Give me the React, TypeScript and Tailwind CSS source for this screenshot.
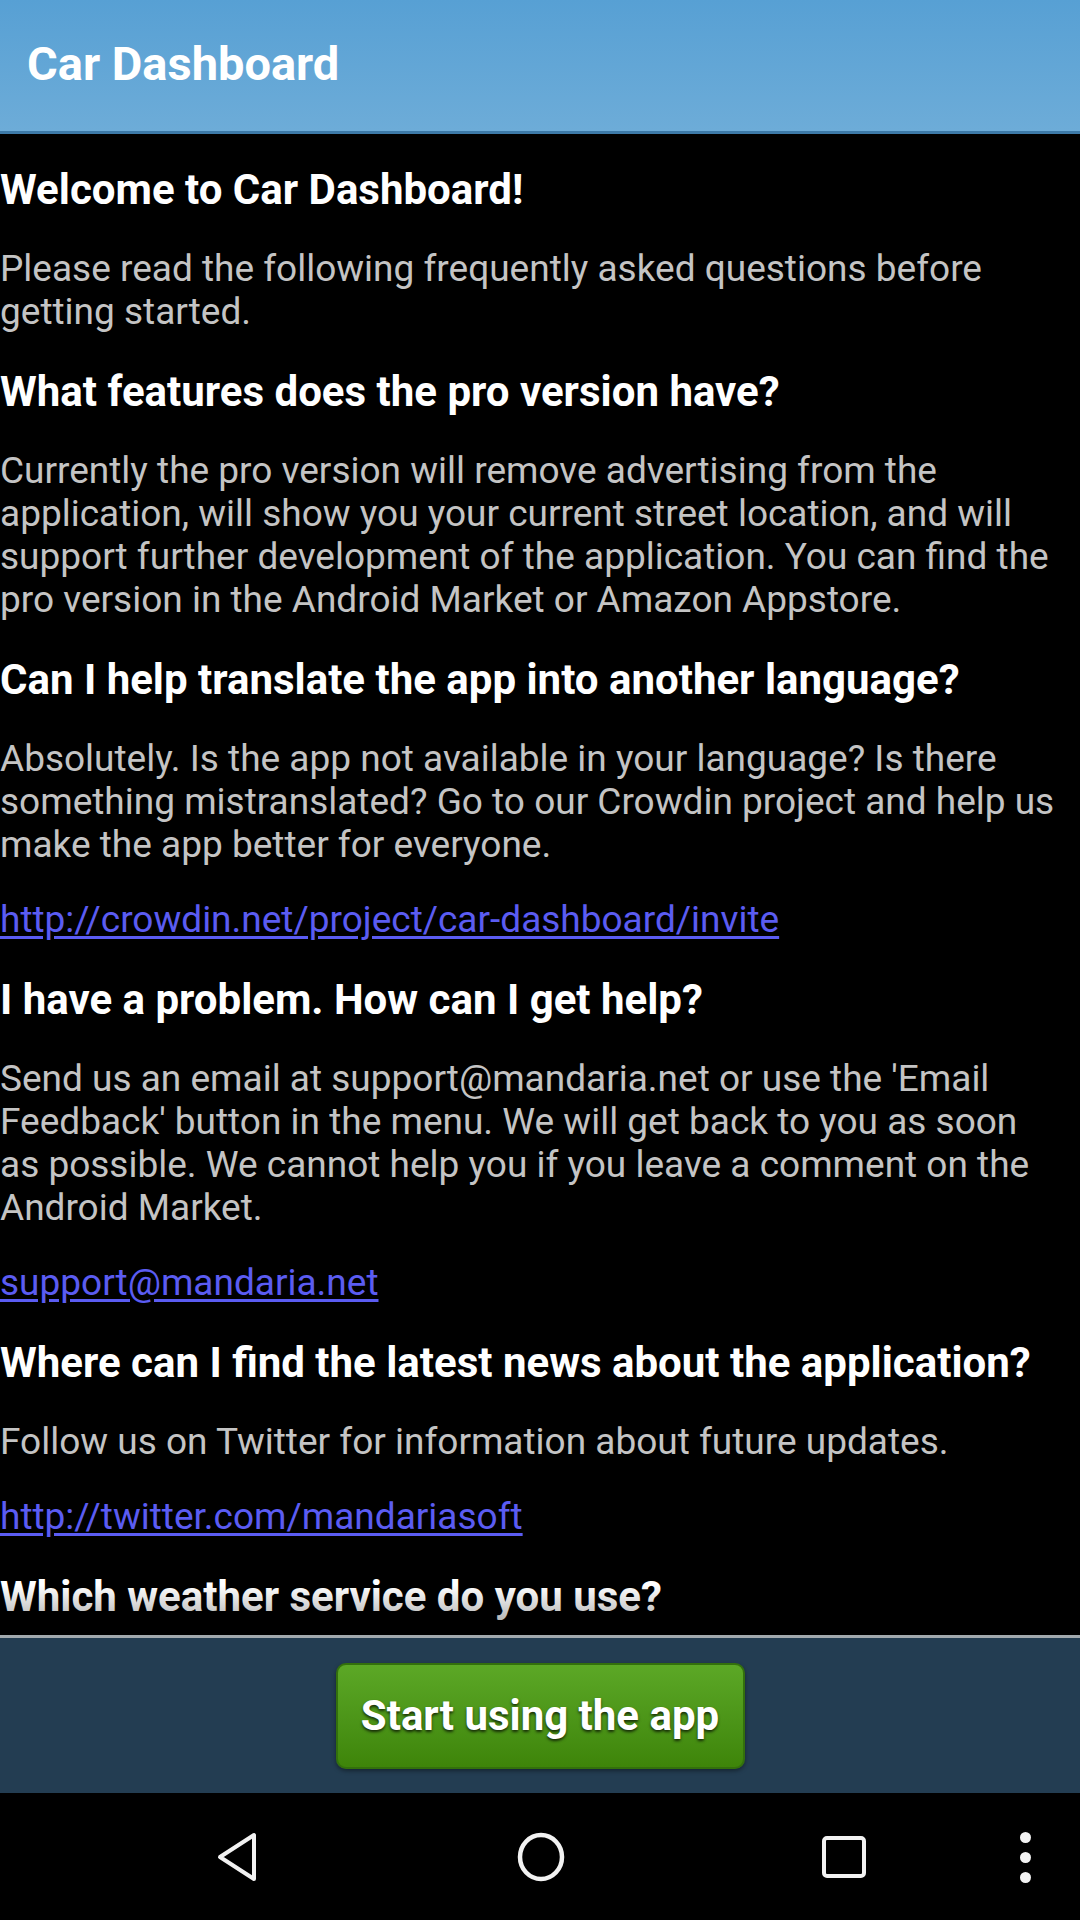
import React from 'react';

type Block =
  | { kind: 'h'; text: string }
  | { kind: 'p'; lines: string[] }
  | { kind: 'a'; text: string };

const blocks: Block[] = [
  { kind: 'h', text: 'Welcome to Car Dashboard!' },
  { kind: 'p', lines: ['Please read the following frequently asked questions before', 'getting started.'] },
  { kind: 'h', text: 'What features does the pro version have?' },
  {
    kind: 'p',
    lines: [
      'Currently the pro version will remove advertising from the',
      'application, will show you your current street location, and will',
      'support further development of the application. You can find the',
      'pro version in the Android Market or Amazon Appstore.',
    ],
  },
  { kind: 'h', text: 'Can I help translate the app into another language?' },
  {
    kind: 'p',
    lines: [
      'Absolutely. Is the app not available in your language? Is there',
      'something mistranslated? Go to our Crowdin project and help us',
      'make the app better for everyone.',
    ],
  },
  { kind: 'a', text: 'http://crowdin.net/project/car-dashboard/invite' },
  { kind: 'h', text: 'I have a problem. How can I get help?' },
  {
    kind: 'p',
    lines: [
      "Send us an email at support@mandaria.net or use the 'Email",
      "Feedback' button in the menu. We will get back to you as soon",
      'as possible. We cannot help you if you leave a comment on the',
      'Android Market.',
    ],
  },
  { kind: 'a', text: 'support@mandaria.net' },
  { kind: 'h', text: 'Where can I find the latest news about the application?' },
  { kind: 'p', lines: ['Follow us on Twitter for information about future updates.'] },
  { kind: 'a', text: 'http://twitter.com/mandariasoft' },
  { kind: 'h', text: 'Which weather service do you use?' },
];

const FaqBlock: React.FC<{ block: Block; first: boolean }> = ({ block, first }) => {
  if (block.kind === 'h') {
    return (
      <h2 className={`${first ? '' : 'mt-[37px]'} text-[42px] leading-[43px] font-bold text-white whitespace-nowrap`}>
        {block.text}
      </h2>
    );
  }
  if (block.kind === 'a') {
    return (
      <a className="mt-[32px] block text-[37px] leading-[43px] text-[#5b5cf2] underline underline-offset-[4px] whitespace-nowrap">
        {block.text}
      </a>
    );
  }
  return (
    <p className="mt-[36px] text-[37px] leading-[43px] text-[#c4c4c4] whitespace-nowrap">
      {block.lines.map((l, i) => (
        <span key={i} className="block">
          {l}
        </span>
      ))}
    </p>
  );
};

const App: React.FC = () => {
  return (
    <div className="w-[1080px] h-[1920px] flex flex-col bg-black font-['Roboto',_sans-serif] overflow-hidden">
      {/* action bar */}
      <div className="h-[134px] shrink-0 flex items-center pl-[27px] bg-gradient-to-b from-[#57a0d4] to-[#6dacd8] border-b-[3px] border-[#3d7aa8]">
        <h1 className="text-[47px] font-bold text-white pb-[2px]">Car Dashboard</h1>
      </div>

      {/* faq scroll area */}
      <div className="relative flex-1 overflow-hidden">
        <div className="flex flex-col pt-[34px]">
          {blocks.map((b, i) => (
            <FaqBlock key={i} block={b} first={i === 0} />
          ))}
        </div>
        <div className="absolute left-0 right-0 bottom-0 h-[50px] bg-gradient-to-b from-transparent to-black/40" />
      </div>

      {/* bottom button bar */}
      <div className="h-[158px] shrink-0 flex items-center justify-center bg-[#233d52] border-t-[3px] border-[#a2a9ae]">
        <button className="w-[409px] h-[106px] rounded-[10px] border-2 border-[#33700c] bg-gradient-to-b from-[#5ca826] to-[#3e8509] text-white text-[42px] font-bold [text-shadow:0_2px_3px_rgba(0,0,0,0.7)] shadow-[0_2px_4px_rgba(0,0,0,0.4)]">
          Start using the app
        </button>
      </div>

      {/* system nav bar */}
      <div className="h-[127px] shrink-0 bg-black relative">
        <div className="absolute left-[212px] top-[38px]">
          <svg width="50" height="52" viewBox="0 0 50 52">
            <path d="M42 4 L42 48 L8 26 Z" fill="none" stroke="#f2f2f2" strokeWidth="4" strokeLinejoin="round" />
          </svg>
        </div>
        <div className="absolute left-[516px] top-[39px]">
          <svg width="50" height="50" viewBox="0 0 50 50">
            <ellipse cx="25" cy="25" rx="21" ry="22" fill="none" stroke="#f2f2f2" strokeWidth="4.5" />
          </svg>
        </div>
        <div className="absolute left-[822px] top-[43px]">
          <svg width="44" height="42" viewBox="0 0 44 42">
            <rect x="2" y="2" width="40" height="38" rx="3" fill="none" stroke="#f2f2f2" strokeWidth="4" />
          </svg>
        </div>
        <div className="absolute left-[1020px] top-[39px] flex flex-col gap-[9px]">
          <span className="w-[11px] h-[11px] rounded-full bg-[#f2f2f2]" />
          <span className="w-[11px] h-[11px] rounded-full bg-[#f2f2f2]" />
          <span className="w-[11px] h-[11px] rounded-full bg-[#f2f2f2]" />
        </div>
      </div>
    </div>
  );
};

export default App;
